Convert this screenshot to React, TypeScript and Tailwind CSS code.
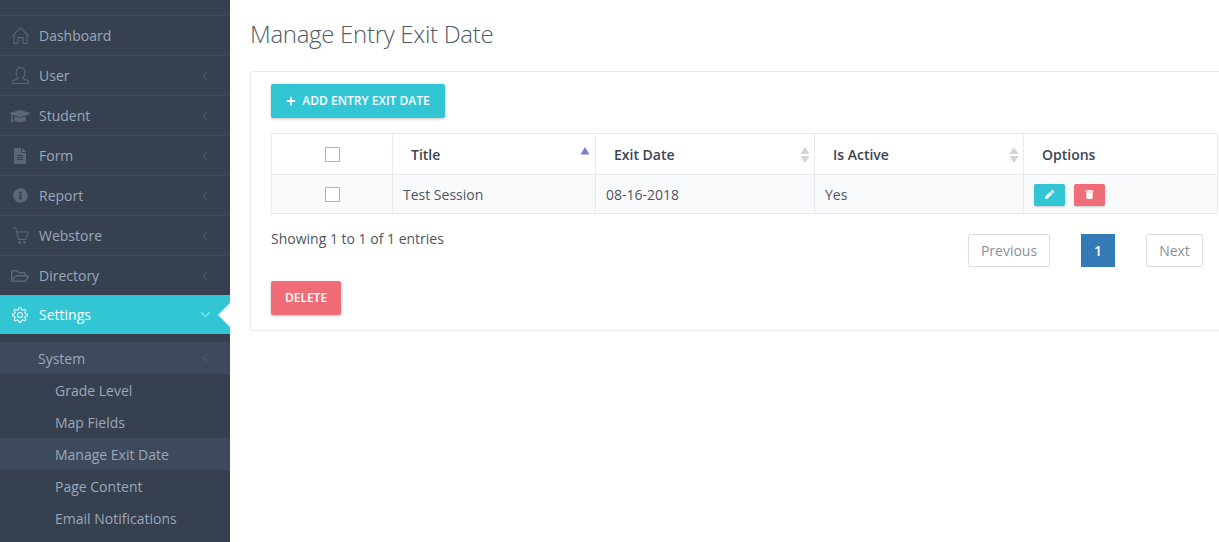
import React from "react";
import { SlHome, SlUser, SlBasket, SlSettings, SlArrowLeft, SlArrowDown } from "react-icons/sl";
import { FaGraduationCap, FaFileAlt, FaInfoCircle, FaRegFolderOpen, FaPlus, FaPen, FaTrash } from "react-icons/fa";

const items: { label: string; icon: React.ReactNode; arrow: boolean }[] = [
  { label: "Dashboard", icon: <SlHome size={17} />, arrow: false },
  { label: "User", icon: <SlUser size={17} />, arrow: true },
  { label: "Student", icon: <FaGraduationCap size={20} />, arrow: true },
  { label: "Form", icon: <FaFileAlt size={16} />, arrow: true },
  { label: "Report", icon: <FaInfoCircle size={15} />, arrow: true },
  { label: "Webstore", icon: <SlBasket size={17} />, arrow: true },
  { label: "Directory", icon: <FaRegFolderOpen size={18} />, arrow: true },
];

const subs = ["Grade Level", "Map Fields", "Manage Exit Date", "Page Content", "Email Notifications"];

function SortArrows() {
  return (
    <svg width="10" height="18" viewBox="0 0 10 18" className="absolute right-[4px] top-[12px]">
      <path d="M5 1 L9.5 8 H0.5 Z" fill="#d4d4d4" />
      <path d="M5 17 L9.5 10 H0.5 Z" fill="#d4d4d4" />
    </svg>
  );
}

function Check() {
  return <span className="inline-block w-[15px] h-[15px] border border-[#b5b5b5] bg-white" />;
}

export default function App() {
  return (
    <div className="flex h-[542px] w-[1219px] overflow-hidden bg-white font-['Open_Sans',sans-serif] text-[14px] text-[#333]">
      <aside className="w-[230px] shrink-0 bg-[#36404e] pt-[15px] text-[#a7b1c2]">
        {items.map((it) => (
          <div key={it.label} className="relative flex h-[40px] items-center border-t border-[#3e4957]">
            <span className="flex w-[39px] justify-center pl-[3px] pr-[2px] text-[#5b6779]">{it.icon}</span>
            <span className="text-[14px] text-[#9aa8bd]">{it.label}</span>
            {it.arrow && <SlArrowLeft size={8} className="ml-auto mr-[21px] text-[#5b6779]" />}
          </div>
        ))}
        <div className="relative flex h-[39px] items-center bg-[#32c6d4] text-white">
          <span className="flex w-[39px] justify-center pl-[3px] pr-[2px]"><SlSettings size={16} /></span>
          <span className="text-[14px]">Settings</span>
          <SlArrowDown size={9} className="ml-auto mr-[20px]" />
          <span className="absolute right-0 top-[8px] h-0 w-0 border-y-[12px] border-r-[12px] border-y-transparent border-r-white" />
        </div>
        <div className="pt-[8px]">
          <div className="flex h-[32px] items-center bg-[#3e4a5b] pl-[38px] text-[#9aa8bd]">
            <span>System</span>
            <SlArrowLeft size={8} className="ml-auto mr-[21px] text-[#5b6779]" />
          </div>
          {subs.map((s) => (
            <div
              key={s}
              className={`flex h-[32px] items-center pl-[55px] text-[#9aa8bd] ${s === "Manage Exit Date" ? "bg-[#3e4a5b]" : ""}`}
            >
              {s}
            </div>
          ))}
        </div>
      </aside>

      <main className="min-w-0 flex-1 pl-[20px]">
        <h1 className="mt-[17px] h-[37px] text-[24px] font-light leading-[33px] tracking-[-0.3px] text-[#4f5b66]">Manage Entry Exit Date</h1>
        <section className="mt-[17px] h-[260px] w-[1000px] rounded-[2px] border border-[#e7eaee] pl-[20px] pr-[31px] pt-[12px] shadow-[0_1px_2px_rgba(0,0,0,0.03)]">
          <button className="flex h-[34px] w-[174px] items-center justify-center rounded-[2px] bg-[#32c6d4] text-[12px] font-semibold text-white shadow-[0_1px_3px_rgba(0,0,0,0.25)]">
            <FaPlus size={10} className="mr-[6px]" />
            ADD ENTRY EXIT DATE
          </button>

          <table className="mt-[15px] w-[946px] table-fixed border-collapse border border-[#e7eaee] text-[14px]">
            <colgroup>
              <col className="w-[121px]" />
              <col className="w-[203px]" />
              <col className="w-[219px]" />
              <col className="w-[209px]" />
              <col className="w-[194px]" />
            </colgroup>
            <thead>
              <tr className="h-[41px] text-left font-semibold text-[#3a4553]">
                <th className="border border-[#e7eaee] text-center font-normal"><span className="relative top-[2px]"><Check /></span></th>
                <th className="relative border border-[#e7eaee] pl-[18px] font-semibold">
                  Title
                  <svg width="10" height="8" viewBox="0 0 10 8" className="absolute right-[5px] top-[13px]"><path d="M5 0 L9.5 7.5 H0.5 Z" fill="#7a7fd6" /></svg>
                </th>
                <th className="relative border border-[#e7eaee] pl-[18px] font-semibold">Exit Date<SortArrows /></th>
                <th className="relative border border-[#e7eaee] pl-[18px] font-semibold">Is Active<SortArrows /></th>
                <th className="border border-[#e7eaee] pl-[18px] font-semibold">Options</th>
              </tr>
            </thead>
            <tbody>
              <tr className="h-[39px] bg-[#f9fafc] text-[#4d5560]">
                <td className="border border-[#e7eaee] text-center"><span className="relative top-[2px]"><Check /></span></td>
                <td className="border border-[#e7eaee] pl-[10px]">Test Session</td>
                <td className="border border-[#e7eaee] pl-[10px]">08-16-2018</td>
                <td className="border border-[#e7eaee] pl-[10px]">Yes</td>
                <td className="border border-[#e7eaee] pl-[10px]">
                  <div className="flex gap-[9px] pt-[1px]">
                    <span className="flex h-[22px] w-[31px] items-center justify-center rounded-[2px] bg-[#32c6d4] text-white shadow-[0_1px_2px_rgba(0,0,0,0.2)]"><FaPen size={9} /></span>
                    <span className="flex h-[22px] w-[31px] items-center justify-center rounded-[2px] bg-[#f06d78] text-white shadow-[0_1px_2px_rgba(0,0,0,0.2)]"><FaTrash size={9} /></span>
                  </div>
                </td>
              </tr>
            </tbody>
          </table>

          <div className="flex items-start justify-between pr-[15px]">
            <div className="mt-[14px] text-[#4d5560]">Showing 1 to 1 of 1 entries</div>
            <div className="mt-[20px] flex text-[#8a8f96]">
              <span className="flex h-[33px] w-[82px] items-center justify-center rounded-[2px] border border-[#dcdfe3]">Previous</span>
              <span className="ml-[31px] flex h-[33px] w-[34px] items-center justify-center bg-[#337ab7] font-semibold text-white">1</span>
              <span className="ml-[31px] flex h-[33px] w-[57px] items-center justify-center rounded-[2px] border border-[#dcdfe3]">Next</span>
            </div>
          </div>

          <button className="mt-[14px] flex h-[34px] w-[70px] items-center justify-center rounded-[2px] bg-[#f06d78] text-[12px] font-semibold text-white shadow-[0_1px_3px_rgba(0,0,0,0.25)]">
            DELETE
          </button>
        </section>
      </main>
    </div>
  );
}
